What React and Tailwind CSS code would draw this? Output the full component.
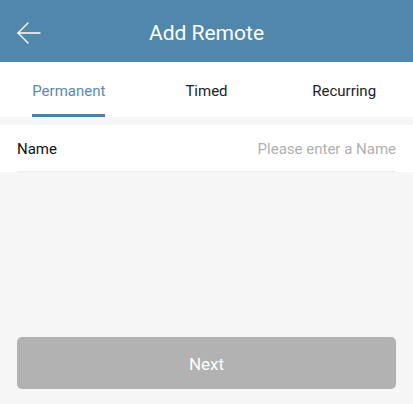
export default function App() {
  return (
    <div className="w-[413px] h-[404px] bg-[#f6f6f6] flex flex-col" style={{ fontFamily: "Roboto, 'Liberation Sans', sans-serif" }}>
      <div className="h-[62px] bg-[#5087ab] flex items-center relative shrink-0">
        <svg className="absolute left-[17px] top-[21px]" width="24" height="24" viewBox="0 0 24 24" fill="none" stroke="#ffffff" strokeWidth="1.4" strokeLinecap="round" strokeLinejoin="round">
          <path d="M1 12 H23" />
          <path d="M11 2 L1 12 L11 22" />
        </svg>
        <div className="w-full text-center text-white text-[21px] leading-none pt-[5px]">Add Remote</div>
      </div>
      <div className="h-[55px] bg-white grid grid-cols-3 shrink-0">
        <div className="flex justify-center">
          <div className="flex flex-col items-center justify-between">
            <span className="pt-[20px] text-[15px] text-[#5a8aab] leading-[18px]">Permanent</span>
            <div className="h-[3px] w-full bg-[#4f809f]"></div>
          </div>
        </div>
        <div className="flex justify-center">
          <span className="pt-[20px] text-[15px] text-[#222222] leading-[18px]">Timed</span>
        </div>
        <div className="flex justify-center">
          <span className="pt-[20px] text-[15px] text-[#222222] leading-[18px]">Recurring</span>
        </div>
      </div>
      <div className="mt-[8px] bg-white px-[17px] shrink-0">
        <div className="h-[47px] flex items-center justify-between border-b border-[#ececec] pt-[2px]">
          <span className="text-[15px] text-[#111111]">Name</span>
          <span className="text-[15px] text-[#b0b0b0]">Please enter a Name</span>
        </div>
      </div>
      <div className="flex-1"></div>
      <div className="px-[17px] pb-[15px]">
        <div className="h-[52px] rounded-[5px] bg-[#b2b2b2] flex items-center justify-center text-white text-[17px] pt-[3px]">Next</div>
      </div>
    </div>
  );
}
